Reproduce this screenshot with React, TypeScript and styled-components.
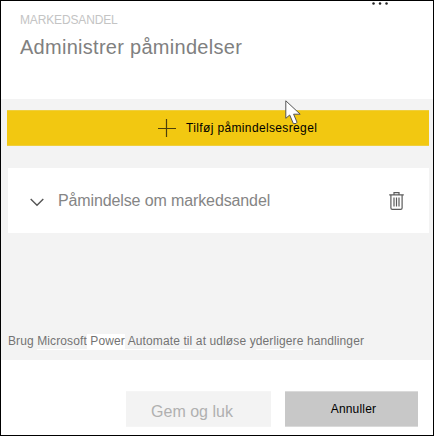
import React from "react";
import styled, { createGlobalStyle } from "styled-components";

const GlobalStyle = createGlobalStyle`
  *, *::before, *::after { box-sizing: border-box; }
  body { margin: 0; background: #fff; font-family: "Liberation Sans", Arial, sans-serif; }
  button { font-family: inherit; border: 0; border-radius: 0; padding: 0; margin: 0; }
  svg { display: block; }
`;

const Panel = styled.main`
  position: relative;
  display: flex;
  flex-direction: column;
  width: 434px;
  height: 436px;
  border: 1px solid #000;
  background: #fff;
  overflow: hidden;
`;

const Header = styled.header`
  height: 98px;
  padding: 12px 0 0 19px;
`;

const Label = styled.span<{ $size: number; $color: string; $spacing?: number }>`
  display: block;
  white-space: nowrap;
  font-size: ${(p) => p.$size}px;
  line-height: 1.2;
  color: ${(p) => p.$color};
  letter-spacing: ${(p) => p.$spacing ?? 0}px;
`;

const Title = styled.h1`
  margin: 8px 0 0;
  font-size: 20px;
  line-height: 24px;
  font-weight: 400;
  letter-spacing: 0.28px;
  color: #808080;
  white-space: nowrap;
`;

const MoreIcon = styled.svg`
  position: absolute;
  top: 0;
  left: 370px;
`;

const Body = styled.section`
  display: flex;
  flex-direction: column;
  height: 261px;
  padding: 11px 4px 0 6px;
  background: #f3f3f3;
`;

const AddButton = styled.button`
  display: flex;
  align-items: center;
  gap: 10px;
  height: 36px;
  padding-left: 151px;
  background: #f2c811;
  border-top: 1px solid #efcf3d;
  border-bottom: 1px solid #efcf3d;
`;

const AlertCard = styled.article`
  display: flex;
  align-items: center;
  height: 65px;
  margin: 22px 0 0 1px;
  padding: 0 25px 0 22px;
  background: #fff;
`;

const AlertName = styled.div`
  flex: 1;
  padding: 1px 0 0 14px;
`;

const Note = styled.p`
  display: flex;
  margin: 101px 0 0 1px;
  font-size: 12px;
  line-height: 14px;
  letter-spacing: 0.11px;
  color: #737373;
  white-space: pre;
`;

const Marked = styled.span<{ $fill?: boolean }>`
  height: 16px;
  border-bottom: 1px solid #fff;
  background: ${(p) => (p.$fill ? "#fff" : "transparent")};
`;

const Footer = styled.footer`
  display: flex;
  gap: 14px;
  padding: 31px 0 0 125px;
`;

const FooterButton = styled.button<{ $primary?: boolean }>`
  display: flex;
  justify-content: center;
  width: ${(p) => (p.$primary ? 133 : 145)}px;
  height: 36px;
  padding-top: 10px;
  padding-left: ${(p) => (p.$primary ? 4 : 0)}px;
  padding-right: ${(p) => (p.$primary ? 0 : 13)}px;
  background: ${(p) => (p.$primary ? "#c8c8c8" : "#f3f3f3")};
  border-top: 1px solid ${(p) => (p.$primary ? "#dadada" : "#f5f5f5")};
  border-bottom: 1px solid ${(p) => (p.$primary ? "#dadada" : "#f5f5f5")};
`;

const Pointer = styled.svg`
  position: absolute;
  left: 283px;
  top: 97px;
`;

export default function App() {
  return (
    <>
      <GlobalStyle />
      <Panel>
        <Header>
          <Label $size={12} $color="#c4c4c4" $spacing={-0.15}>MARKEDSANDEL</Label>
          <Title>Administrer påmindelser</Title>
          <MoreIcon width="20" height="5" viewBox="0 0 20 5" fill="#222">
            <circle cx="2.5" cy="2.4" r="1.25" />
            <circle cx="9" cy="2.4" r="1.25" />
            <circle cx="15.5" cy="2.4" r="1.25" />
          </MoreIcon>
        </Header>
        <Body>
          <AddButton>
            <svg width="18" height="18" viewBox="0 0 18 18" stroke="#4d400b" strokeWidth="1.2">
              <path d="M0 9.5H18M8.5 0V18" />
            </svg>
            <Label $size={12} $color="#000" $spacing={0.36}>Tilføj påmindelsesregel</Label>
          </AddButton>
          <AlertCard>
            <svg width="14" height="15" viewBox="0 -5 14 15" fill="none" stroke="#555" strokeWidth="1.4">
              <path d="M.7 1L7 7.3L13.3 1" />
            </svg>
            <AlertName>
              <Label $size={16} $color="#858585" $spacing={-0.12}>Påmindelse om markedsandel</Label>
            </AlertName>
            <svg width="15" height="18" viewBox="0 0 15 18" fill="none" stroke="#5c5c5c" strokeWidth="1.2">
              <path d="M.2 2.8H14.8M5 2.5V.7H10V2.5M1.9 3V16Q1.9 17.4 3.3 17.4H11.7Q13.1 17.4 13.1 16V3M5 5.5V14.5M7.5 5.5V14.5M10 5.5V14.5" />
            </svg>
          </AlertCard>
          <Note>
            <span>Brug </span>
            <Marked>Microsoft</Marked>
            <Marked $fill> Power</Marked>
            <Marked> Automate til a</Marked>
            <span>t udløse y</span>
            <Marked>derligere</Marked>
            <span> handlinger</span>
          </Note>
        </Body>
        <Footer>
          <FooterButton>
            <Label $size={16} $color="#b0b0b0">Gem og luk</Label>
          </FooterButton>
          <FooterButton $primary>
            <Label $size={12} $color="#000" $spacing={0.2}>Annuller</Label>
          </FooterButton>
        </Footer>
        <Pointer width="18" height="28" viewBox="0 0 18 28">
          <path d="M1.8 2.8V20.3L5.7 17L9.3 25.5H12L13 24.2L9.6 16.2H16.2Z" fill="#fff" stroke="#555" strokeWidth="1" />
        </Pointer>
      </Panel>
    </>
  );
}
